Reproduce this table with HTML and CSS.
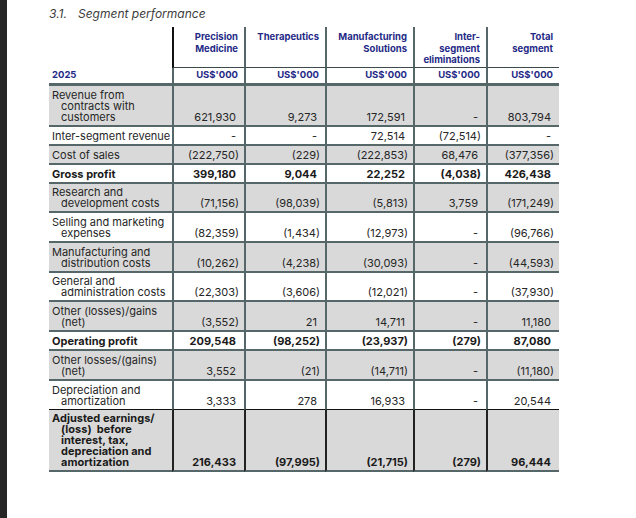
FILE: index.html
```html
<!DOCTYPE html>
<html>
<head>
<meta charset="utf-8">
<link rel="stylesheet" href="styles.css">
</head>
<body>
<div class="page">
  <div class="strip"></div>
  <div class="content">
    <h1 class="title"><span class="num-title">3.1.</span>Segment performance</h1>
    <div class="table">
      <div class="c hd hl"></div>
      <div class="c hd">Precision<br>Medicine</div>
      <div class="c hd">Therapeutics</div>
      <div class="c hd">Manufacturing<br>Solutions</div>
      <div class="c hd">Inter-<br>segment<br>eliminations</div>
      <div class="c hd">Total<br>segment</div>

      <div class="c yr lab">2025</div>
      <div class="c yr">US$'000</div>
      <div class="c yr">US$'000</div>
      <div class="c yr">US$'000</div>
      <div class="c yr">US$'000</div>
      <div class="c yr">US$'000</div>

      <div class="c g lab">Revenue from<br>contracts with<br>customers</div>
      <div class="c g n p">621,930</div>
      <div class="c g n p">9,273</div>
      <div class="c g n p">172,591</div>
      <div class="c g n p">-</div>
      <div class="c g n p">803,794</div>

      <div class="c lab">Inter-segment revenue</div>
      <div class="c n p">-</div>
      <div class="c n p">-</div>
      <div class="c n p">72,514</div>
      <div class="c n">(72,514)</div>
      <div class="c n p">-</div>

      <div class="c g lab">Cost of sales</div>
      <div class="c g n">(222,750)</div>
      <div class="c g n">(229)</div>
      <div class="c g n">(222,853)</div>
      <div class="c g n p">68,476</div>
      <div class="c g n">(377,356)</div>

      <div class="c lab b">Gross profit</div>
      <div class="c n b p">399,180</div>
      <div class="c n b p">9,044</div>
      <div class="c n b p">22,252</div>
      <div class="c n b">(4,038)</div>
      <div class="c n b p">426,438</div>

      <div class="c g lab">Research and<br>development costs</div>
      <div class="c g n">(71,156)</div>
      <div class="c g n">(98,039)</div>
      <div class="c g n">(5,813)</div>
      <div class="c g n p">3,759</div>
      <div class="c g n">(171,249)</div>

      <div class="c lab">Selling and marketing<br>expenses</div>
      <div class="c n">(82,359)</div>
      <div class="c n">(1,434)</div>
      <div class="c n">(12,973)</div>
      <div class="c n p">-</div>
      <div class="c n">(96,766)</div>

      <div class="c g lab">Manufacturing and<br>distribution costs</div>
      <div class="c g n">(10,262)</div>
      <div class="c g n">(4,238)</div>
      <div class="c g n">(30,093)</div>
      <div class="c g n p">-</div>
      <div class="c g n">(44,593)</div>

      <div class="c lab">General and<br>administration costs</div>
      <div class="c n">(22,303)</div>
      <div class="c n">(3,606)</div>
      <div class="c n">(12,021)</div>
      <div class="c n p">-</div>
      <div class="c n">(37,930)</div>

      <div class="c g lab">Other (losses)/gains<br>(net)</div>
      <div class="c g n">(3,552)</div>
      <div class="c g n p">21</div>
      <div class="c g n p">14,711</div>
      <div class="c g n p">-</div>
      <div class="c g n p">11,180</div>

      <div class="c lab b">Operating profit</div>
      <div class="c n b p">209,548</div>
      <div class="c n b">(98,252)</div>
      <div class="c n b">(23,937)</div>
      <div class="c n b">(279)</div>
      <div class="c n b p">87,080</div>

      <div class="c g lab">Other losses/(gains)<br>(net)</div>
      <div class="c g n p">3,552</div>
      <div class="c g n">(21)</div>
      <div class="c g n">(14,711)</div>
      <div class="c g n p">-</div>
      <div class="c g n">(11,180)</div>

      <div class="c lab pre-adj">Depreciation and<br>amortization</div>
      <div class="c n p pre-adj">3,333</div>
      <div class="c n p pre-adj">278</div>
      <div class="c n p pre-adj">16,933</div>
      <div class="c n p pre-adj">-</div>
      <div class="c n p pre-adj">20,544</div>

      <div class="c g lab b adj">Adjusted earnings/<br>(loss)&nbsp; before<br>interest, tax,<br>depreciation and<br>amortization</div>
      <div class="c g n b p adj">216,433</div>
      <div class="c g n b adj">(97,995)</div>
      <div class="c g n b adj">(21,715)</div>
      <div class="c g n b adj">(279)</div>
      <div class="c g n b p adj">96,444</div>
    </div>
  </div>
</div>
</body>
</html>
```

FILE: styles.css
```css
* { box-sizing: border-box; }
html, body { margin: 0; padding: 0; background: #ffffff; }
body { font-family: "Inter", "Noto Sans", sans-serif; color: #262626; }

.page { display: flex; min-height: 518px; }
.strip { width: 7px; background: #262626; flex: none; }
.content { padding-left: 42px; padding-top: 6px; }

.title {
  margin: 0;
  font-size: 12px;
  line-height: 16px;
  font-weight: 400;
  font-style: italic;
  color: #3c3c3c;
}
.num-title { display: inline-block; width: 29px; }

.table {
  margin-top: 5px;
  display: grid;
  grid-template-columns: 123px 72px 81px 88px 73px 73px;
  grid-template-rows: 41px 18px 41px 19px 19px 19px 29px 30px 30px 29px 30px 19px 30px 29px 62px;
  font-size: 11px;
  line-height: 11px;
}

.c {
  display: flex;
  flex-direction: column;
  justify-content: flex-end;
  border-bottom: 2px solid #56676a;
  border-left: 2px solid #56676a;
  padding: 0 5px 2px 3px;
}
.c.lab {
  border-left: none;
  white-space: nowrap;
  text-indent: -9px;
  padding-left: 12px;
  padding-right: 0;
}
.c.n { text-align: right; align-items: flex-end; }
.c.p { padding-right: 8px; }
.g { background: #d9d9d9; }
.b { font-weight: 700; color: #1a1a1a; }

.hd {
  justify-content: flex-start;
  text-align: right;
  align-items: flex-end;
  font-weight: 700;
  font-size: 9.5px;
  line-height: 11.5px;
  color: #1f2a86;
  padding: 4px 6px 0 0;
  border-bottom: 1.5px solid #3c4a4c;
}
.hd:nth-child(2) { border-left-color: #111111; }
.hd.hl { border-left: none; border-bottom: none; }

.yr {
  font-weight: 700;
  font-size: 9.5px;
  color: #1f2a86;
  text-align: right;
  align-items: flex-end;
  padding: 0 6px 3px 0;
  border-bottom: 3px solid #56676a;
}
.yr.lab { text-align: left; align-items: flex-start; padding-left: 3px; text-indent: 0; }

.pre-adj { border-bottom: 1.5px solid #111111; }
.adj { border-left-color: #222222; border-bottom: 2.5px solid #56676a; line-height: 11px; }
.adj.lab { border-left: none; }
```
